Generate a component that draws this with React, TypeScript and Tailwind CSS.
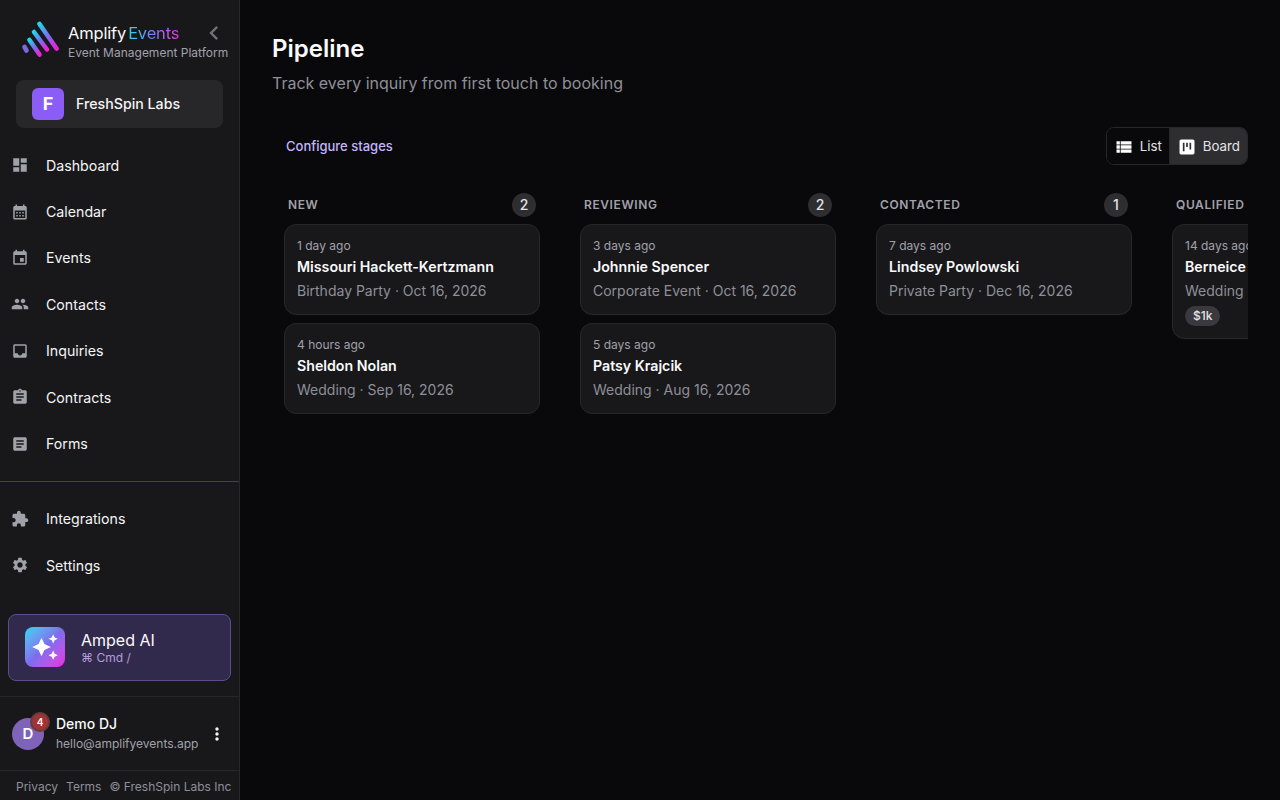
import React from 'react';
import {
  MdDashboard,
  MdCalendarMonth,
  MdEvent,
  MdPeople,
  MdInbox,
  MdAssignment,
  MdArticle,
  MdExtension,
  MdSettings,
  MdChevronLeft,
  MdMoreVert,
  MdViewList,
  MdViewKanban,
  MdAutoAwesome,
} from 'react-icons/md';

type Lead = { ago: string; name: string; detail: string; amount?: string };
type Stage = { title: string; count: number; leads: Lead[] };

const mainNav = [
  { label: 'Dashboard', icon: MdDashboard },
  { label: 'Calendar', icon: MdCalendarMonth },
  { label: 'Events', icon: MdEvent },
  { label: 'Contacts', icon: MdPeople },
  { label: 'Inquiries', icon: MdInbox },
  { label: 'Contracts', icon: MdAssignment },
  { label: 'Forms', icon: MdArticle },
];

const lowerNav = [
  { label: 'Integrations', icon: MdExtension },
  { label: 'Settings', icon: MdSettings },
];

const stages: Stage[] = [
  {
    title: 'NEW',
    count: 2,
    leads: [
      { ago: '1 day ago', name: 'Missouri Hackett-Kertzmann', detail: 'Birthday Party · Oct 16, 2026' },
      { ago: '4 hours ago', name: 'Sheldon Nolan', detail: 'Wedding · Sep 16, 2026' },
    ],
  },
  {
    title: 'REVIEWING',
    count: 2,
    leads: [
      { ago: '3 days ago', name: 'Johnnie Spencer', detail: 'Corporate Event · Oct 16, 2026' },
      { ago: '5 days ago', name: 'Patsy Krajcik', detail: 'Wedding · Aug 16, 2026' },
    ],
  },
  {
    title: 'CONTACTED',
    count: 1,
    leads: [{ ago: '7 days ago', name: 'Lindsey Powlowski', detail: 'Private Party · Dec 16, 2026' }],
  },
  {
    title: 'QUALIFIED',
    count: 1,
    leads: [{ ago: '14 days ago', name: 'Berneice Langworth', detail: 'Wedding · Nov 16, 2026', amount: '$1k' }],
  },
];

const NavRow = ({ label, icon: Icon }: { label: string; icon: React.ComponentType<{ className?: string }> }) => (
  <div className="flex h-[46.4px] items-center pl-[11px]">
    <Icon className="h-[18px] w-[18px] text-[#a1a1aa]" />
    <span className="ml-[17px] text-[14.2px] text-[#f4f4f5]">{label}</span>
  </div>
);

const Logo = () => (
  <svg width="38" height="40" viewBox="0 0 38 40" fill="none" strokeLinecap="round" strokeWidth="4.6">
    <defs>
      <linearGradient id="logoGrad" x1="0" y1="0" x2="1" y2="1">
        <stop offset="0" stopColor="#22d3ee" />
        <stop offset="0.5" stopColor="#7c6cf0" />
        <stop offset="1" stopColor="#f01ed8" />
      </linearGradient>
    </defs>
    <path d="M3.5 27 L5.5 30.5" stroke="#7a68e4" />
    <path d="M8.5 20 L18.5 34.5" stroke="url(#logoGrad)" />
    <path d="M13 12 L26 29.5" stroke="url(#logoGrad)" />
    <path d="M18.5 4 L35.5 28.5" stroke="url(#logoGrad)" />
  </svg>
);

const LeadCard = ({ lead }: { lead: Lead }) => (
  <div className="rounded-xl border border-[#27272a] bg-[#18181b] px-3 pt-3 pb-3">
    <div className="text-xs leading-[18px] whitespace-nowrap text-[#a1a1aa]">{lead.ago}</div>
    <div className="mt-[1px] text-[14.2px] leading-[22px] font-semibold whitespace-nowrap text-[#fafafa]">{lead.name}</div>
    <div className="mt-[2px] text-sm leading-[22px] whitespace-nowrap text-[#8f8f98]">{lead.detail}</div>
    {lead.amount && (
      <div className="mt-[4px] flex h-5 w-fit items-center rounded-full bg-[#3a3a3e] px-2 text-xs font-medium text-[#e4e4e7]">
        {lead.amount}
      </div>
    )}
  </div>
);

export default function App() {
  return (
    <div className="flex h-screen w-full overflow-hidden bg-[#09090b] font-['Inter',sans-serif]">
      <aside className="relative flex h-full w-[240px] shrink-0 flex-col border-r border-[#27272a] bg-[#18181b]">
        <div className="flex h-[80px] shrink-0 items-center pl-[21px]">
          <Logo />
          <div className="mt-[1px] ml-[9px]">
            <div className="text-[16.5px] leading-[24px] tracking-[-0.17px] text-[#fafafa]">
              Amplify
              <span className="ml-[2px] bg-gradient-to-r from-[#22d3ee] via-[#6d7cf0] to-[#e91ee0] bg-clip-text text-transparent">
                Events
              </span>
            </div>
            <div className="text-xs leading-[16px] whitespace-nowrap text-[#a1a1aa]">Event Management Platform</div>
          </div>
        </div>
        <div className="absolute top-[19px] left-[200px]">
          <MdChevronLeft className="h-7 w-7 text-[#71717a]" />
        </div>
        <div className="mx-4 flex h-12 shrink-0 items-center rounded-lg bg-[#27272a] pl-4">
          <div className="flex h-8 w-8 items-center justify-center rounded-md bg-[#8b5cf6] text-lg font-bold text-white">F</div>
          <span className="ml-3 text-[14.2px] font-medium text-[#f4f4f5]">FreshSpin Labs</span>
        </div>
        <nav className="mt-[14px] shrink-0">
          {mainNav.map((item) => (
            <NavRow key={item.label} {...item} />
          ))}
        </nav>
        <div className="mt-[14px] h-px shrink-0 bg-[#453c60]" />
        <nav className="mt-[14px] shrink-0">
          {lowerNav.map((item) => (
            <NavRow key={item.label} {...item} />
          ))}
        </nav>
        <div className="mx-2 mt-[25px] flex h-[67px] shrink-0 items-center rounded-lg border border-[#5d4d8a] bg-[#322a4d] pl-4">
          <div className="flex h-10 w-10 items-center justify-center rounded-lg bg-gradient-to-br from-[#22d3ee] via-[#7c6cf0] to-[#e91ee0]">
            <MdAutoAwesome className="h-7 w-7 text-white" />
          </div>
          <div className="ml-4 pb-[2px]">
            <div className="text-base leading-[22px] text-[#fafafa]">Amped AI</div>
            <div className="text-xs leading-[13px] text-[#b39ddb]">⌘ Cmd /</div>
          </div>
        </div>
        <div className="mt-[15px] flex h-[75px] shrink-0 items-center border-y border-[#27272a] pt-[2px] pr-3 pl-3">
          <div className="relative flex h-8 w-8 shrink-0 items-center justify-center rounded-full bg-[#7e63b8] text-[15px] font-semibold text-white">
            D
            <div className="absolute -top-[6px] -right-[6px] flex h-5 w-5 items-center justify-center rounded-full border-2 border-[#6b3a3c] bg-[#a03434] text-[10px] font-semibold">
              4
            </div>
          </div>
          <div className="ml-3 min-w-0 flex-1">
            <div className="text-sm leading-[20px] font-medium text-[#fafafa]">Demo DJ</div>
            <div className="text-xs leading-[20px] whitespace-nowrap text-[#a1a1aa]">hello@amplifyevents.app</div>
          </div>
          <MdMoreVert className="h-5 w-5 shrink-0 text-[#f4f4f5]" />
        </div>
        <div className="flex h-[29px] shrink-0 items-center gap-2 pt-[3px] pl-4 text-xs whitespace-nowrap text-[#8f8f98]">
          <span>Privacy</span>
          <span>Terms</span>
          <span>© FreshSpin Labs Inc</span>
        </div>
      </aside>

      <main className="min-w-0 flex-1 px-8 pt-[32px]">
        <h1 className="text-2xl leading-[34px] font-semibold text-[#fafafa]">Pipeline</h1>
        <p className="mt-[4px] text-base leading-[26px] text-[#8f8f98]">Track every inquiry from first touch to booking</p>
        <div className="mt-[31px] flex h-[38px] items-center justify-between pl-[14px]">
          <span className="pt-px text-[13px] font-medium text-[#c4b5fd]">Configure stages</span>
          <div className="flex h-[38px] overflow-hidden rounded-lg border border-[#27272a]">
            <div className="flex items-center gap-[6px] border-r border-[#27272a] bg-[#09090b] px-[7px] pt-px text-[13.3px] text-[#e4e4e7]">
              <MdViewList className="h-5 w-5 text-white" />
              List
            </div>
            <div className="flex items-center gap-[6px] bg-[#2e2e31] px-[7px] pt-px text-[13.3px] text-[#e4e4e7]">
              <MdViewKanban className="h-5 w-5 text-white" />
              Board
            </div>
          </div>
        </div>
        <div className="mt-[21px] flex gap-10 overflow-hidden px-3">
          {stages.map((stage) => (
            <section key={stage.title} className="w-64 shrink-0">
              <div className="flex h-[38px] items-center justify-between px-1">
                <span className="text-xs font-semibold tracking-[0.6px] text-[#a1a1aa]">{stage.title}</span>
                <span className="flex h-6 w-6 items-center justify-center rounded-full bg-[#2e2e31] text-sm font-medium text-[#e4e4e7]">
                  {stage.count}
                </span>
              </div>
              <div className="flex flex-col gap-2">
                {stage.leads.map((lead) => (
                  <LeadCard key={lead.name} lead={lead} />
                ))}
              </div>
            </section>
          ))}
        </div>
      </main>
    </div>
  );
}
